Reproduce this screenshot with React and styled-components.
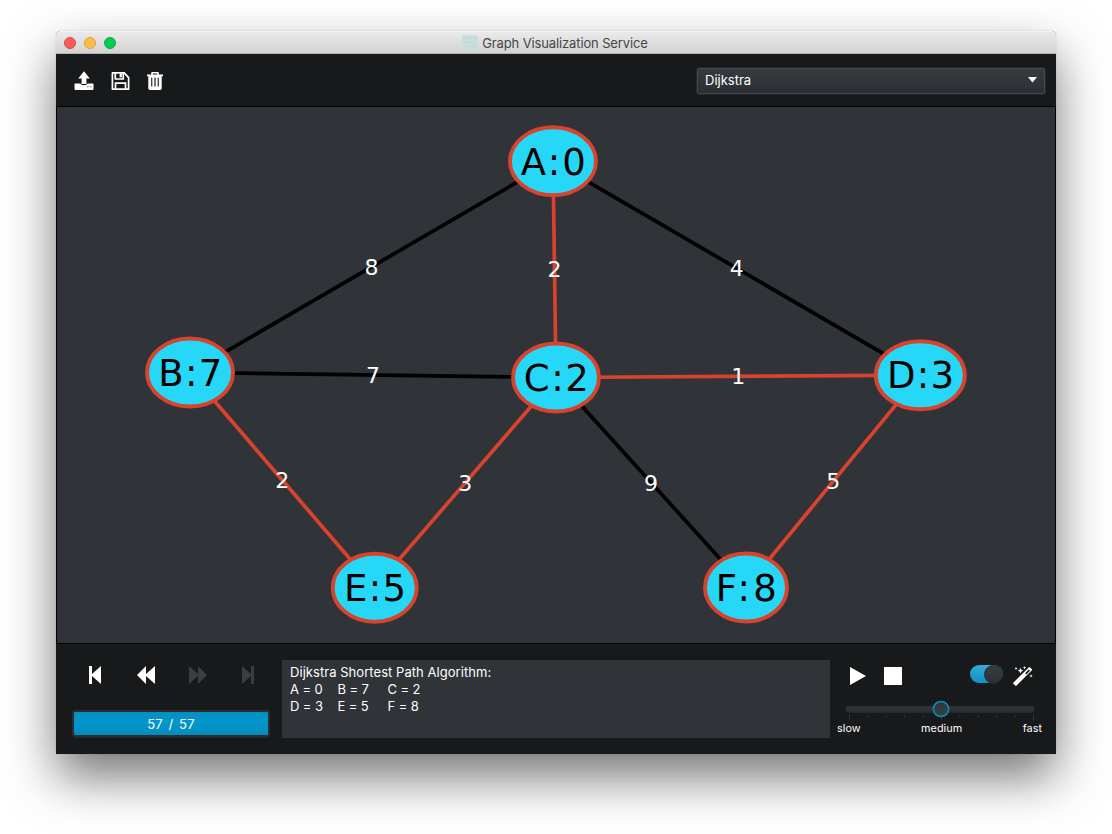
import React from 'react';
import styled, { createGlobalStyle } from 'styled-components';

const Global = createGlobalStyle`
  * { box-sizing: border-box; }
  body { margin: 0; background: #fff; font-family: Inter, "Liberation Sans", sans-serif; overflow: hidden; }
`;

const Desktop = styled.main`
  height: 834px;
  padding: 31px 56px 0;
`;

const Window = styled.section`
  display: flex;
  flex-direction: column;
  width: 1000px;
  height: 723px;
  border-radius: 5px 5px 0 0;
  background: #17191a;
  color: #fff;
  box-shadow: 0 0 1px rgba(0, 0, 0, 0.4), 0 23px 50px rgba(0, 0, 0, 0.54);
`;

const TitleBar = styled.header`
  position: relative;
  display: flex;
  align-items: center;
  justify-content: center;
  gap: 4px;
  height: 23px;
  padding: 2px 2px 0 0;
  border-radius: 5px 5px 0 0;
  border-bottom: 1px solid #b3b3b3;
  background: linear-gradient(#ebebeb, #d3d3d3);
  box-shadow: inset 0 1px 0 #f4f4f4;
  color: #464646;
  font-size: 13px;
  letter-spacing: -0.13px;
`;

const Lights = styled.div`
  position: absolute;
  left: 8px;
  top: 6px;
  display: flex;
  gap: 8px;
`;

const Light = styled.span`
  width: 12px;
  height: 12px;
  border-radius: 50%;
  background: ${(p) => p.$fill};
  border: 1px solid ${(p) => p.$edge};
`;

const Toolbar = styled.div`
  display: flex;
  align-items: center;
  justify-content: space-between;
  height: 52px;
  padding: 1px 10px 0 18px;
`;

const Tools = styled.div`
  display: flex;
  align-items: center;
  gap: 17px;
`;

const IconButton = styled.button`
  display: flex;
  padding: 0;
  border: 0;
  background: none;
  color: ${(p) => (p.disabled ? '#3b3d3f' : '#fff')};
`;

const Select = styled.div`
  display: flex;
  align-items: center;
  justify-content: space-between;
  width: 350px;
  height: 28px;
  padding: 0 8px 1px 8px;
  border: 1px solid #24282b;
  border-radius: 3px;
  background: linear-gradient(#373c40, #2b2f33);
  box-shadow: inset 0 0 0 1px #42484d;
  font-size: 13px;
`;

const Canvas = styled.div`
  height: 538px;
  border: 1px solid #000;
  background: #303338;
  svg { display: block; }
`;

const NodeLabel = styled.text`
  font: 37px "DejaVu Sans", sans-serif;
  fill: #000;
  text-anchor: middle;
`;

const EdgeLabel = styled.text`
  font: 22px "DejaVu Sans", sans-serif;
  fill: #fff;
  text-anchor: middle;
`;

const Footer = styled.footer`
  display: flex;
  height: 110px;
  padding: 16px 14px 0 16px;
`;

const Playback = styled.div`
  width: 198px;
  margin-right: 12px;
`;

const StepRow = styled.div`
  display: flex;
  justify-content: space-between;
  height: 20px;
  margin: 5px 14px 0 16px;
`;

const Progress = styled.div`
  height: 27px;
  margin-top: 25px;
  border: 2px solid #2a2c31;
  border-radius: 3px;
  background: linear-gradient(#028fc0, #0497cc 45%, #028cbc);
  box-shadow: 0 1px 0 #26282a;
  font-size: 13px;
  line-height: 25px;
  letter-spacing: 0.25px;
  word-spacing: 1.7px;
  text-align: center;
`;

const Log = styled.pre`
  flex: none;
  width: 548px;
  height: 78px;
  margin: 0;
  padding: 4px 8px;
  background: #303338;
  font: 13px/17px Inter, "Liberation Sans", sans-serif;
`;

const LogLine = styled.div`
  display: grid;
  grid-template-columns: ${(p) => (p.$cells ? '47.5px 50px auto' : 'auto')};
  letter-spacing: ${(p) => (p.$cells ? '-0.1px' : '0.05px')};
`;

const Controls = styled.div`
  flex: none;
  width: 205px;
  margin-left: 7px;
`;

const ControlRow = styled.div`
  display: flex;
  align-items: center;
  height: 31px;
  padding-left: 12px;
`;

const Toggle = styled.span`
  display: flex;
  flex: none;
  justify-content: flex-end;
  width: 33px;
  height: 18px;
  margin: 0 10px 3px 68px;
  border-radius: 9px;
  background: linear-gradient(#37a9d3, #0b93c9);
`;

const Knob = styled.span`
  width: 19px;
  height: 19px;
  border-radius: 50%;
  border: 1px solid #24282b;
  background: linear-gradient(#393e42, #2b2f33);
`;

const SliderBox = styled.div`
  height: 24px;
  margin-top: 7px;
  svg { display: block; }
`;

const SpeedLabels = styled.div`
  display: flex;
  justify-content: space-between;
  font-size: 10.8px;
  line-height: 14px;
  letter-spacing: 0.05px;
`;

const nodes = [
  { t: 'A:0', x: 553, y: 161.3, rx: 43, w: 65 },
  { t: 'B:7', x: 190, y: 372.5, rx: 43, w: 64 },
  { t: 'C:2', x: 556, y: 377.5, rx: 43, w: 65 },
  { t: 'D:3', x: 920.3, y: 375.2, rx: 44.5, w: 67 },
  { t: 'E:5', x: 374.7, y: 587.8, rx: 42, w: 62 },
  { t: 'F:8', x: 746, y: 587.5, rx: 41, w: 61 },
];

const edges = [
  { a: 0, b: 1, w: 8 },
  { a: 0, b: 3, w: 4 },
  { a: 1, b: 2, w: 7 },
  { a: 2, b: 5, w: 9 },
  { a: 0, b: 2, w: 2, tree: true },
  { a: 2, b: 3, w: 1, tree: true },
  { a: 1, b: 4, w: 2, tree: true },
  { a: 2, b: 4, w: 3, tree: true },
  { a: 3, b: 5, w: 5, tree: true },
];

function Graph() {
  return (
    <svg width="998" height="536" viewBox="57 107 998 536">
      {edges.map(({ a, b, tree }) => (
        <line key={`${a}${b}`} x1={nodes[a].x} y1={nodes[a].y} x2={nodes[b].x} y2={nodes[b].y}
          stroke={tree ? '#d8432e' : '#000'} strokeWidth="3.7" />
      ))}
      {edges.map(({ a, b, w }) => (
        <EdgeLabel key={`${a}${b}`} x={(nodes[a].x + nodes[b].x) / 2} y={(nodes[a].y + nodes[b].y) / 2 + 8}>{w}</EdgeLabel>
      ))}
      {nodes.map((n) => (
        <g key={n.t}>
          <ellipse cx={n.x} cy={n.y} rx={n.rx} ry="34" fill="#26d7f8" stroke="#d8432e" strokeWidth="3.9" />
          <NodeLabel x={n.x + 0.3} y={n.y + 13.2} textLength={n.w}>{n.t}</NodeLabel>
        </g>
      ))}
    </svg>
  );
}

const UploadIcon = () => (
  <svg width="20" height="20" viewBox="0 0 20 20" fill="currentColor">
    <path d="M10 .3 15.8 7.6h-3.4V13H7.6V7.6H4.2z" />
    <path fillRule="evenodd" d="M1.3 12.4h5.2q.4 1.8 3.5 1.8t3.5-1.8h5.2q.8 0 .8.8v4.9q0 .8-.8.8H1.3q-.8 0-.8-.8v-4.9q0-.8.8-.8zM13.4 15.3v1h1v-1zm2.9 0v1h1v-1z" />
  </svg>
);

const SaveIcon = () => (
  <svg width="19" height="20" viewBox="0 0 19 20" fill="none" stroke="currentColor" strokeWidth="1.7">
    <path d="M1.4 1.9h11.8l4.4 4.7v11.6H1.4z" strokeLinejoin="round" />
    <path d="M4.5 18v-5.8h10V18M4.3 2v6h8V2" />
    <path d="M8.6 2.4h2.4v4H8.6z" fill="currentColor" stroke="none" />
  </svg>
);

const TrashIcon = () => (
  <svg width="16" height="20" viewBox="0 0 16 20">
    <path d="M5 4V1.8h6V4" fill="none" stroke="currentColor" strokeWidth="1.6" strokeLinejoin="round" />
    <path fill="currentColor" fillRule="evenodd" d="M0 3.4h16v1.9h-1.3V17.2q0 1.7-1.7 1.7H3q-1.7 0-1.7-1.7V5.3H0zM4.2 6.8v8.6h1.1V6.8zm3.2 0v8.6h1.2V6.8zm3.3 0v8.6h1.1V6.8z" />
  </svg>
);

const WandIcon = () => (
  <svg width="20" height="20" viewBox="0 0 20 20" fill="currentColor">
    <path fillRule="evenodd" d="M.5 16.6 15.7 1.4q.7-.7 1.4 0l1.6 1.6q.7.7 0 1.4L3.5 19.5q-.7.7-1.4 0L.5 18q-.7-.7 0-1.4zM12.2 7.2l1.2 1.2 3.6-3.6-1.2-1.2z" />
    <path d="m3 1 .5 1 1 .5-1 .5L3 4l-.5-1-1-.5 1-.5zM7.5 1.8l.9 1.9 1.9.9-1.9.9-.9 1.9-.9-1.9-1.9-.9 1.9-.9zM11.5 0l.5 1.2 1.2.5-1.2.5-.5 1.2-.5-1.2-1.2-.5 1.2-.5zM18 8.3l.5 1.2 1.2.5-1.2.5-.5 1.2-.5-1.2-1.2-.5 1.2-.5z" />
  </svg>
);

const Glyph = ({ w, d }) => (
  <svg width={w} height="20" viewBox={`0 0 ${w} 20`} fill="currentColor"><path d={d} /></svg>
);

const SpeedSlider = () => (
  <SliderBox>
    <svg width="205" height="24" viewBox="837 698 205 24">
      <defs>
        <linearGradient id="thumb" x2="0" y2="1"><stop stopColor="#30363a" /><stop offset="1" stopColor="#383d41" /></linearGradient>
      </defs>
      <rect x="845.5" y="706" width="189" height="7" rx="3" fill="#25282a" />
      <rect x="846" y="706" width="188" height="5.5" rx="2" fill="#303238" />
      {Array.from({ length: 11 }, (_, i) => (
        <rect key={i} x={849 + i * 18.4} y={i % 5 ? 715 : 714} width="1" height={i % 5 ? 3 : 6} fill="#303335" />
      ))}
      <circle cx="941" cy="709" r="7.6" fill="url(#thumb)" stroke="#078fc2" strokeWidth="1.5" />
    </svg>
  </SliderBox>
);

export default function App() {
  return (
    <Desktop>
      <Global />
      <Window>
        <TitleBar>
          <Lights>
            <Light $fill="#fc5b57" $edge="#df4744" />
            <Light $fill="#fdbc4a" $edge="#dd9f36" />
            <Light $fill="#04ca56" $edge="#10aa3e" />
          </Lights>
          <svg width="16" height="16" viewBox="0 0 16 16">
            <rect width="16" height="16" fill="#cbdddc" />
            <path d="M1 3h14M1 7h13M2 12h13" stroke="#c3d9e0" strokeWidth="1.5" />
            <path d="M0 10h15M3 14h12" stroke="#c4e2d3" strokeWidth="1.5" />
          </svg>
          <span>Graph Visualization Service</span>
        </TitleBar>
        <Toolbar>
          <Tools>
            <IconButton aria-label="Open"><UploadIcon /></IconButton>
            <IconButton aria-label="Save"><SaveIcon /></IconButton>
            <IconButton aria-label="Delete"><TrashIcon /></IconButton>
          </Tools>
          <Select>
            <span>Dijkstra</span>
            <svg width="9" height="6" viewBox="0 0 9 6"><path d="M0 0h9L4.5 5.6z" fill="#fff" /></svg>
          </Select>
        </Toolbar>
        <Canvas><Graph /></Canvas>
        <Footer>
          <Playback>
            <StepRow>
              <IconButton aria-label="First"><Glyph w={14} d="M1 1h3v8l9-8v18L4 11v8H1z" /></IconButton>
              <IconButton aria-label="Back"><Glyph w={18} d="M0 10 9 1v8l9-8v18l-9-8v8z" /></IconButton>
              <IconButton aria-label="Forward" disabled><Glyph w={18} d="M18 10 9 1v8L0 1v18l9-8v8z" /></IconButton>
              <IconButton aria-label="Last" disabled><Glyph w={14} d="M12 1H9v8L0 1v18l9-8v8h3z" /></IconButton>
            </StepRow>
            <Progress>57 / 57</Progress>
          </Playback>
          <Log>
            <LogLine>Dijkstra Shortest Path Algorithm:</LogLine>
            <LogLine $cells><span>A = 0</span><span>B = 7</span><span>C = 2</span></LogLine>
            <LogLine $cells><span>D = 3</span><span>E = 5</span><span>F = 8</span></LogLine>
          </Log>
          <Controls>
            <ControlRow>
              <IconButton aria-label="Play"><Glyph w={18} d="M1 1v18l16-9z" /></IconButton>
              <IconButton aria-label="Stop"><Glyph w={35} d="M17 1h18v18H17z" /></IconButton>
              <Toggle><Knob /></Toggle>
              <IconButton aria-label="Auto layout"><WandIcon /></IconButton>
            </ControlRow>
            <SpeedSlider />
            <SpeedLabels><span>slow</span><span>medium</span><span>fast</span></SpeedLabels>
          </Controls>
        </Footer>
      </Window>
    </Desktop>
  );
}
